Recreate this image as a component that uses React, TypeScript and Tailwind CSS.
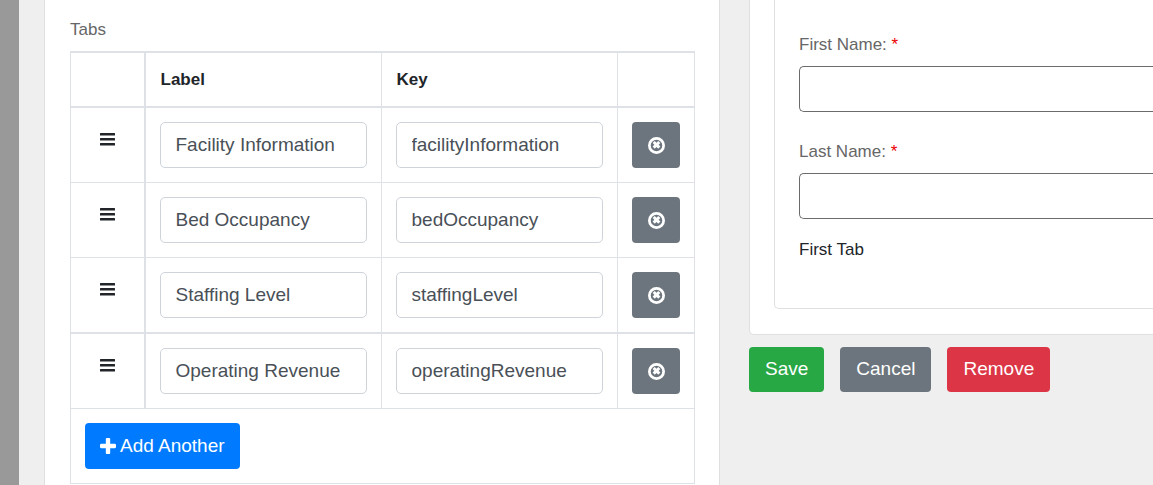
import { useState } from "react";
import type { ReactNode } from "react";

type TabRow = { label: string; key: string };

const initialRows: TabRow[] = [
  { label: "Facility Information", key: "facilityInformation" },
  { label: "Bed Occupancy", key: "bedOccupancy" },
  { label: "Staffing Level", key: "staffingLevel" },
  { label: "Operating Revenue", key: "operatingRevenue" },
];

function BarsIcon() {
  return (
    <svg viewBox="0 0 15 13" className="h-[13px] w-[15px]" fill="currentColor" aria-hidden="true">
      <rect x="0" y="0" width="15" height="2.6" rx="0.2" />
      <rect x="0" y="5" width="15" height="2.6" rx="0.2" />
      <rect x="0" y="10" width="15" height="2.6" rx="0.2" />
    </svg>
  );
}

function CircleTimesIcon() {
  return (
    <svg viewBox="0 128 1536 1536" className="size-[17px]" fill="currentColor" aria-hidden="true">
      <circle cx="768" cy="896" r="645" fill="none" stroke="currentColor" strokeWidth="246" />
      <path d="M1097 1015l-146 146q-10 10-23 10t-23-10l-137-137-137 137q-10 10-23 10t-23-10l-146-146q-10-10-10-23t10-23l137-137-137-137q-10-10-10-23t10-23l146-146q10-10 23-10t23 10l137 137 137-137q10-10 23-10t23 10l146 146q10 10 10 23t-10 23l-137 137 137 137q10 10 10 23t-10 23z" />
    </svg>
  );
}

function PlusIcon() {
  return (
    <svg viewBox="0 128 1408 1408" className="size-4" fill="currentColor" aria-hidden="true">
      <path d="M1408 736v192q0 40-28 68t-68 28H896v416q0 40-28 68t-68 28H608q-40 0-68-28t-28-68v-416H96q-40 0-68-28T0 928V736q0-40 28-68t68-28h416V224q0-40 28-68t68-28h192q40 0 68 28t28 68v416h416q40 0 68 28t28 68z" />
    </svg>
  );
}

function ActionButton({ className, children }: { className: string; children: ReactNode }) {
  return (
    <button type="button" className={`h-[45px] rounded px-4 text-[19px] text-white ${className}`}>
      {children}
    </button>
  );
}

function RequiredField({ id, label }: { id: string; label: string }) {
  return (
    <div>
      <label htmlFor={id} className="mb-2 block text-[17px] leading-[26px] text-[#666666]">
        {label} <span className="text-[#eb0000]">*</span>
      </label>
      <input
        id={id}
        type="text"
        required
        className="block h-[46px] w-full rounded-l-[5px] border border-r-0 border-[#6b6b6b] bg-white px-[15px] text-[19px] text-[#495057]"
      />
    </div>
  );
}

export default function App() {
  const [rows, setRows] = useState(initialRows);

  const update = (index: number, field: keyof TabRow, value: string) =>
    setRows(rows.map((row, i) => (i === index ? { ...row, [field]: value } : row)));

  const inputClass =
    "block h-[46px] w-full rounded-[5px] border border-[#ced4da] bg-white px-[15px] text-[19px] text-[#495057]";

  return (
    <div className="flex min-h-screen bg-[#efefef] font-['Liberation_Sans',Arial,sans-serif] text-[#212529]">
      <div className="w-[19px] shrink-0 bg-[#999999]" />
      <main className="grid flex-1 grid-cols-[169fr_101fr] gap-x-[29px] pl-[25px]">
        <section className="border-x border-[#dfdfdf] bg-white pt-[17px] pr-6 pl-[25px]">
          <h2 className="mb-2 text-[17px] leading-[26px] text-[#666666]">Tabs</h2>
          <table className="w-full table-fixed border-collapse border border-[#dee2e6]">
            <colgroup>
              <col className="w-[74px]" />
              <col />
              <col />
              <col className="w-[77px]" />
            </colgroup>
            <thead>
              <tr className="h-[55px] border-y-2 border-[#dee2e6] text-left text-[17px]">
                <th className="border-r-2 border-[#dee2e6]" />
                <th className="border-r border-[#dee2e6] px-[15px] font-bold">Label</th>
                <th className="border-r border-[#dee2e6] px-[15px] font-bold">Key</th>
                <th />
              </tr>
            </thead>
            <tbody>
              {rows.map((row, i) => (
                <tr key={i} className="border-b border-[#dee2e6] nth-3:border-b-2">
                  <td className="border-r-2 border-[#dee2e6] pt-[25px] align-top">
                    <button type="button" aria-label={`Reorder ${row.label}`} className="mx-auto block">
                      <BarsIcon />
                    </button>
                  </td>
                  <td className="border-r border-[#dee2e6] px-[14px] py-[14px]">
                    <input
                      aria-label="Label"
                      className={inputClass}
                      value={row.label}
                      onChange={(e) => update(i, "label", e.target.value)}
                    />
                  </td>
                  <td className="border-r border-[#dee2e6] px-[14px] py-[14px]">
                    <input
                      aria-label="Key"
                      className={inputClass}
                      value={row.key}
                      onChange={(e) => update(i, "key", e.target.value)}
                    />
                  </td>
                  <td className="px-[14px] py-[14px]">
                    <button
                      type="button"
                      aria-label={`Remove ${row.label}`}
                      onClick={() => setRows(rows.filter((_, j) => j !== i))}
                      className="flex h-[46px] w-full items-center justify-center rounded bg-[#6c757d] text-white"
                    >
                      <CircleTimesIcon />
                    </button>
                  </td>
                </tr>
              ))}
              <tr>
                <td colSpan={4} className="px-[14px] py-[14px]">
                  <button
                    type="button"
                    onClick={() => setRows([...rows, { label: "", key: "" }])}
                    className="flex h-[46px] items-center gap-1 rounded bg-[#007bff] px-[15px] text-[19px] text-white"
                  >
                    <PlusIcon />
                    Add Another
                  </button>
                </td>
              </tr>
            </tbody>
          </table>
        </section>

        <section>
          <div className="rounded-bl-[5px] border-b border-l border-[#dfdfdf] bg-white pb-[25px] pl-6">
            <div className="rounded-bl-[5px] border-b border-l border-[#dfdfdf] pt-8 pb-[45px] pl-6">
              <div className="flex flex-col gap-[27px]">
                <RequiredField id="first-name" label="First Name:" />
                <RequiredField id="last-name" label="Last Name:" />
              </div>
              <p className="mt-[18px] text-[17px] leading-[26px]">First Tab</p>
            </div>
          </div>
          <div className="mt-3 flex gap-4">
            <ActionButton className="bg-[#28a745]">Save</ActionButton>
            <ActionButton className="bg-[#6c757d]">Cancel</ActionButton>
            <ActionButton className="bg-[#dc3545]">Remove</ActionButton>
          </div>
        </section>
      </main>
    </div>
  );
}
